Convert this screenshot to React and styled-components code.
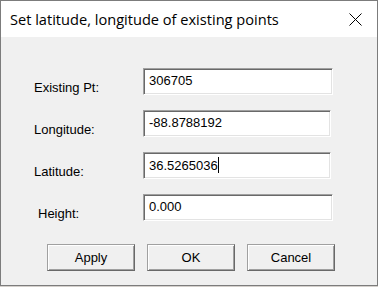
import React from "react";
import styled, { createGlobalStyle } from "styled-components";

const Global = createGlobalStyle`
  html, body { margin: 0; padding: 0; background: #d4d0cc; }
  body { width: 378px; height: 287px; overflow: hidden; }
`;

const Window = styled.div`
  width: 376px;
  height: 284px;
  border: 1px solid #7c7c7c;
  background: #f0f0f0;
  display: flex;
  flex-direction: column;
`;

const TitleBar = styled.div`
  height: 36px;
  background: #ffffff;
  display: flex;
  align-items: center;
  justify-content: space-between;
  padding: 0 15px 0 9px;
  font-family: "Open Sans", "Noto Sans", sans-serif;
  font-size: 14.6px;
  color: #000;
`;

const Title = styled.span`
  margin-top: -1px;
`;

const Body = styled.div`
  flex: 1;
  padding: 31px 0 0 33px;
  display: flex;
  flex-direction: column;
  font-family: "Liberation Sans", Arial, sans-serif;
  font-size: 13px;
  color: #000;
`;

const Form = styled.div`
  display: grid;
  grid-template-columns: 109px auto;
  row-gap: 15px;
`;

const Label = styled.div`
  padding-top: 12px;
  padding-left: ${(p) => p.$indent || 0}px;
  line-height: 15px;
`;

const Field = styled.div`
  box-sizing: border-box;
  width: ${(p) => p.$w}px;
  height: 27px;
  background: #fff;
  border-top: 1px solid #a0a0a0;
  border-left: 1px solid #a0a0a0;
  border-right: 1px solid #ffffff;
  border-bottom: 1px solid #ffffff;
  box-shadow: inset 1px 1px 0 #696969, inset -1px -1px 0 #e3e3e3;
  padding: 4px 0 0 5px;
  line-height: 15px;
  white-space: nowrap;
`;

const Caret = styled.span`
  display: inline-block;
  width: 1px;
  height: 16px;
  background: #000;
  vertical-align: -3px;
`;

const Buttons = styled.div`
  display: flex;
  gap: 12px;
  margin-top: 23px;
  margin-left: 13px;
`;

const Button = styled.button`
  box-sizing: border-box;
  width: 88px;
  height: 27px;
  background: #f0f0f0;
  border-top: 1px solid #a0a0a0;
  border-left: 1px solid #a0a0a0;
  border-right: 1px solid #696969;
  border-bottom: 1px solid #696969;
  box-shadow: inset 1px 1px 0 #ffffff, inset -1px -1px 0 #a0a0a0;
  font-family: "Liberation Sans", Arial, sans-serif;
  font-size: 13px;
  color: #000;
  padding: 0;
`;

const CloseIcon = () => (
  <svg width="13" height="13" viewBox="0 0 13 13">
    <path d="M0.5 0.5 L12.5 12.5 M12.5 0.5 L0.5 12.5" stroke="#000" strokeWidth="1" fill="none" />
  </svg>
);

const rows = [
  { label: "Existing Pt:", value: "306705", w: 190 },
  { label: "Longitude:", value: "-88.8788192", w: 188 },
  { label: "Latitude:", value: "36.5265036", w: 188, caret: true },
  { label: "Height:", value: "0.000", w: 190, indent: 4 },
];

export default function App() {
  return (
    <>
      <Global />
      <Window>
        <TitleBar>
          <Title>Set latitude, longitude of existing points</Title>
          <CloseIcon />
        </TitleBar>
        <Body>
          <Form>
            {rows.map((r) => (
              <React.Fragment key={r.label}>
                <Label $indent={r.indent}>{r.label}</Label>
                <Field $w={r.w}>
                  {r.value}
                  {r.caret && <Caret />}
                </Field>
              </React.Fragment>
            ))}
          </Form>
          <Buttons>
            <Button>Apply</Button>
            <Button>OK</Button>
            <Button>Cancel</Button>
          </Buttons>
        </Body>
      </Window>
    </>
  );
}
